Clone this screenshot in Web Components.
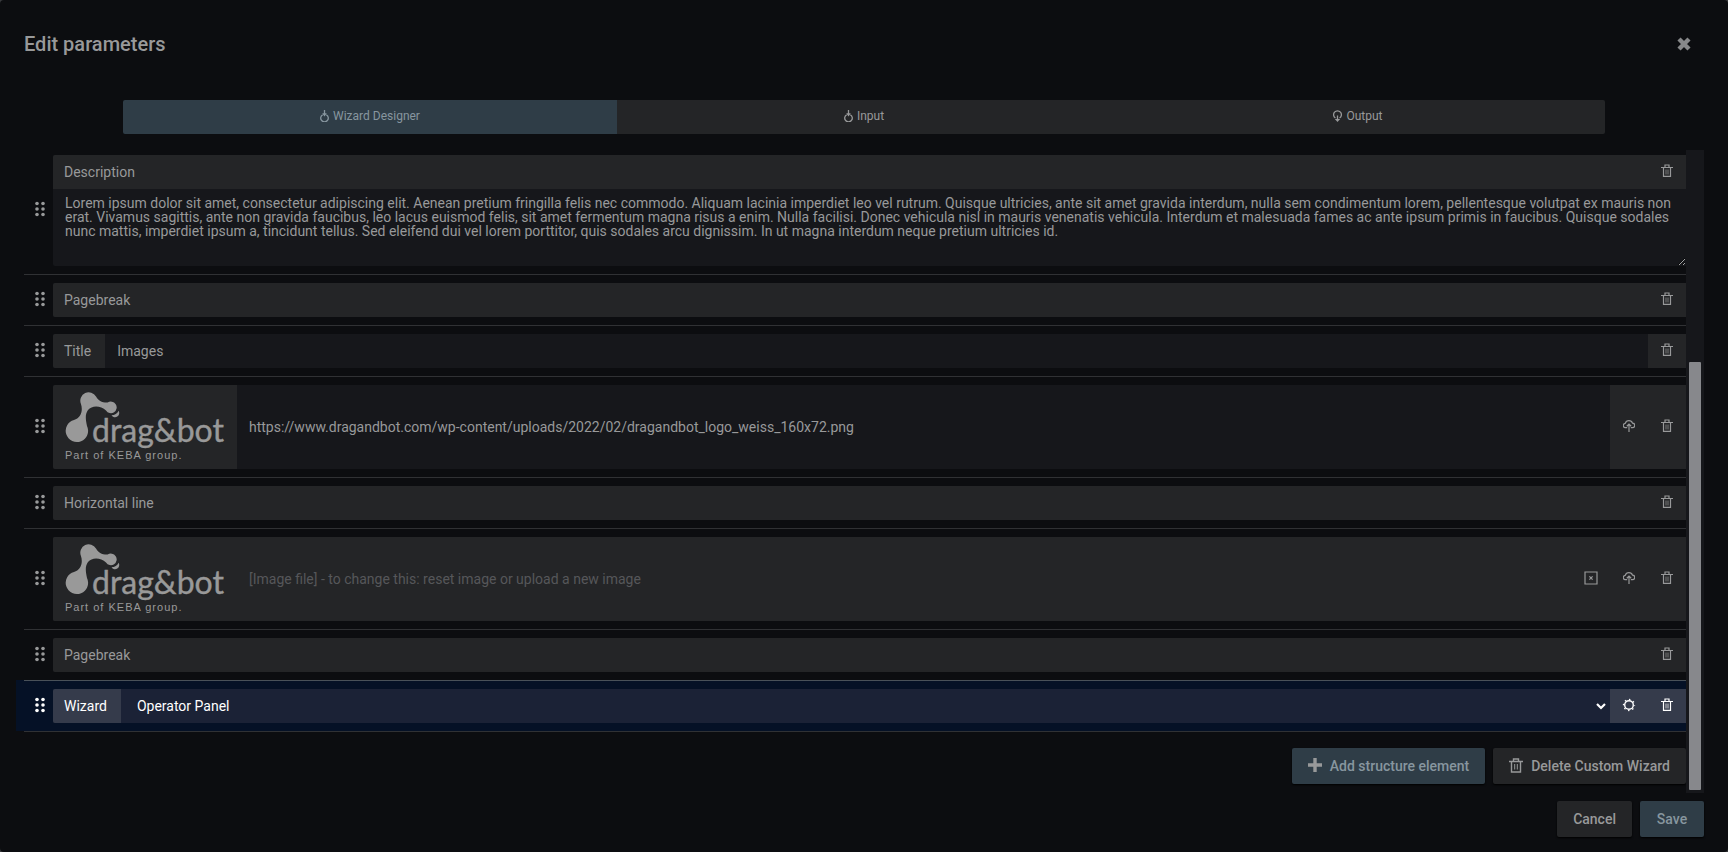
<!DOCTYPE html>
<html lang="en">
<head>
<meta charset="utf-8">
<title>Edit parameters</title>
<style>
  body {
    margin: 0;
    background: #3a3b3e;
    font-family: Roboto, "Liberation Sans", sans-serif;
    font-size: 14px;
    color: #98999a;
    --dialog: #0c0d10;
    --block: #242527;
    --field: #16171b;
    --line: #303134;
    --primary: #2f3d47;
    --primary-text: #87969f;
  }
</style>
</head>
<body>
<edit-dialog heading="Edit parameters">
  <tab-bar slot="tabs"></tab-bar>

  <structure-row type="text" label="Description" value="Lorem ipsum dolor sit amet, consectetur adipiscing elit. Aenean pretium fringilla felis nec commodo. Aliquam lacinia imperdiet leo vel rutrum. Quisque ultricies, ante sit amet gravida interdum, nulla sem condimentum lorem, pellentesque volutpat ex mauris non erat. Vivamus sagittis, ante non gravida faucibus, leo lacus euismod felis, sit amet fermentum magna risus a enim. Nulla facilisi. Donec vehicula nisl in mauris venenatis vehicula. Interdum et malesuada fames ac ante ipsum primis in faucibus. Quisque sodales nunc mattis, imperdiet ipsum a, tincidunt tellus. Sed eleifend dui vel lorem porttitor, quis sodales arcu dignissim. In ut magna interdum neque pretium ultricies id."></structure-row>
  <structure-row type="plain" label="Pagebreak"></structure-row>
  <structure-row type="title" label="Title" value="Images"></structure-row>
  <structure-row type="image" label="Image URL" value="https://www.dragandbot.com/wp-content/uploads/2022/02/dragandbot_logo_weiss_160x72.png"></structure-row>
  <structure-row type="plain" label="Horizontal line"></structure-row>
  <structure-row type="file" label="Image file" value="[Image file] - to change this: reset image or upload a new image"></structure-row>
  <structure-row type="plain" label="Pagebreak"></structure-row>
  <structure-row type="wizard" label="Wizard" value="Operator Panel" active></structure-row>

  <text-button slot="actions" kind="primary" icon="plus">Add structure element</text-button>
  <text-button slot="actions" icon="trash-large">Delete Custom Wizard</text-button>

  <text-button slot="footer">Cancel</text-button>
  <text-button slot="footer" kind="primary">Save</text-button>
</edit-dialog>

<script>
const ICONS = {
  trash: [12, 13, '<path d="M0 3.500h12M4 3V1h4v2M2.500 3.500v8.800h7V3.500" stroke-width="1.200"/><path d="M5 5.500v5M7 5.500v5" opacity=".75"/>'],
  'trash-large': [14, 15, '<path d="M0 3.500h14M4.500 3V1h5v2M2.500 3.500v10.500h9V3.500" stroke-width="1.400"/><path d="M5.700 6v5.500M8.300 6v5.500"/>'],
  upload: [12, 13, '<path d="M4.200 8.700H2.700A2.200 2.200 0 0 1 2.300 4.300 3.800 3.800 0 0 1 9.500 4.100 2.300 2.300 0 0 1 9.300 8.700H7.800M6 13V5.300M3.800 7.300l2.200-2.100 2.200 2.100" stroke-width="1.200"/>'],
  reset: [14, 14, '<path d="M1 1h12v12H1z" stroke-width="1.200"/><path d="M5.400 5.400l3.200 3.200M8.600 5.400L5.400 8.600" stroke-width="1.200"/>'],
  gear: [14, 14, '<circle cx="7" cy="7" r="4.300" stroke-width="1.400"/><circle cx="7" cy="7" r="5.500" stroke-width="1.300" stroke-dasharray="1.500 2.820" stroke-dashoffset=".75"/>'],
  input: [9, 12, '<path d="M2.700 4.700a3.800 3.800 0 1 0 3.600 0M4.500 0v5" stroke-width="1.300"/><path d="M2.200 3.300h4.600L4.500 6.400z" fill="currentColor" stroke="none"/>'],
  output: [9, 12, '<path d="M2.400 8A3.900 3.900 0 1 1 6.600 8M4.500 5.500v4" stroke-width="1.300"/><path d="M1.800 9h5.400L4.500 12z" fill="currentColor" stroke="none"/>'],
  plus: [14, 14, '<path d="M7 0v14M0 7h14" stroke-width="3.400"/>'],
  close: [16, 16, '<path d="M3 3l10 10M13 3L3 13" stroke-width="4.400"/>'],
  chevron: [10, 8, '<path d="M1 2l4 4 4-4" stroke-width="2.200"/>'],
  handle: [10, 16, [2, 8].map(x => [2.5, 8, 13.5].map(y =>
    `<circle cx="${x}" cy="${y}" r="1.8" fill="currentColor" stroke="none"/>`).join('')).join('')]
};

class AppIcon extends HTMLElement {
  constructor() {
    super();
    this.attachShadow({ mode: 'open' });
  }

  connectedCallback() {
    const [w, h, shape] = ICONS[this.getAttribute('name')];
    this.shadowRoot.innerHTML = `
      <style>
        :host { display: inline-flex; flex: none; }
        svg { display: block; fill: none; stroke: currentColor; }
      </style>
      <svg width="${w}" height="${h}" viewBox="0 0 ${w} ${h}" aria-hidden="true">${shape}</svg>
    `;
  }
}
customElements.define('app-icon', AppIcon);

class BrandLogo extends HTMLElement {
  constructor() {
    super();
    this.attachShadow({ mode: 'open' }).innerHTML = `
      <style>
        :host { display: block; }
        svg { display: block; fill: #999; }
        .name { font: 32px Lato, sans-serif; stroke: #999; stroke-width: .4; }
        .claim { font: 11px "Liberation Sans", sans-serif; letter-spacing: 1px; }
      </style>
      <svg width="160" height="72" viewBox="0 0 160 72">
        <path d="M15.800 12.500A8.400 8.400 0 0 1 31 5.500C33 9.500 37 11.800 42.600 11.600A5.800 5.800 0 1 1 41 19.500C36 14.500 27 13.800 23 19C20 23 20.500 28 22 35A11.200 11.200 0 1 1 9 29C15.500 27 18.500 20 15.800 12.500z"/>
        <path d="M46.500 24.300A8 8 0 0 0 53.600 19.800A4.200 4.200 0 0 1 46.500 24.300z"/>
        <text class="name" x="27" y="51">drag&amp;bot</text>
        <text class="claim" x="0" y="68">Part of KEBA group.</text>
      </svg>
    `;
  }
}
customElements.define('brand-logo', BrandLogo);

class TextButton extends HTMLElement {
  constructor() {
    super();
    this.attachShadow({ mode: 'open' });
  }

  connectedCallback() {
    const icon = this.getAttribute('icon');
    this.shadowRoot.innerHTML = `
      <style>
        :host { display: block; }
        button {
          display: flex;
          align-items: center;
          justify-content: center;
          gap: 8px;
          min-width: 64px;
          height: 36px;
          padding: 0 16px;
          border: 0;
          border-radius: 2px;
          background: var(--block);
          color: inherit;
          font: inherit;
          font-weight: 500;
          box-shadow: 0 1px 2px #000;
        }
        :host([kind="primary"]) button {
          background: var(--primary);
          color: var(--primary-text);
        }
        app-icon {
          padding-bottom: 2px;
          color: #98999a;
        }
      </style>
      <button type="button">${icon ? `<app-icon name="${icon}"></app-icon>` : ''}<slot></slot></button>
    `;
  }
}
customElements.define('text-button', TextButton);

class TabBar extends HTMLElement {
  constructor() {
    super();
    this.attachShadow({ mode: 'open' }).innerHTML = `
      <style>
        :host { display: block; }
        div {
          display: grid;
          grid-template-columns: repeat(3, 1fr);
          border-radius: 2px;
          overflow: hidden;
        }
        button {
          display: flex;
          align-items: center;
          justify-content: center;
          gap: 4px;
          height: 34px;
          padding: 0 0 2px;
          border: 0;
          background: var(--block);
          color: inherit;
          font: inherit;
          font-size: 12px;
        }
        [aria-selected="true"] {
          background: var(--primary);
          color: var(--primary-text);
        }
      </style>
      <div role="tablist">
        <button type="button" role="tab" aria-selected="true"><app-icon name="input"></app-icon>Wizard Designer</button>
        <button type="button" role="tab" aria-selected="false"><app-icon name="input"></app-icon>Input</button>
        <button type="button" role="tab" aria-selected="false"><app-icon name="output"></app-icon>Output</button>
      </div>
    `;
  }
}
customElements.define('tab-bar', TabBar);

const rowTemplate = document.createElement('template');
rowTemplate.innerHTML = `
  <style>
    :host {
      display: block;
      margin-left: -8px;
      padding-left: 8px;
    }
    .row {
      display: flex;
      align-items: center;
      padding: 8px 0;
      border-top: 1px solid var(--line);
    }
    :host([type="text"]) .row {
      padding-top: 5px;
      border-top: 0;
    }
    .handle {
      display: flex;
      box-sizing: border-box;
      width: 29px;
      padding: 0 0 3px 11px;
    }
    .block {
      display: flex;
      flex: 1;
      min-width: 0;
      min-height: 34px;
      border-radius: 2px 0 0 2px;
      background: var(--field);
      overflow: hidden;
    }
    .label {
      display: flex;
      align-items: center;
      min-height: 34px;
      padding: 0 14px 0 11px;
      background: var(--block);
    }
    .wide { flex: 1; }
    .head { display: flex; }
    input, textarea, select {
      box-sizing: border-box;
      flex: 1;
      width: 100%;
      min-width: 0;
      margin: 0;
      padding: 0 12px;
      border: 0;
      border-radius: 0;
      outline: 0;
      background: transparent;
      color: inherit;
      font: inherit;
    }
    textarea {
      display: block;
      flex: none;
      height: 77px;
      padding: 7px 12px;
      line-height: 14px;
      resize: vertical;
    }
    select {
      grid-area: 1 / 1;
      padding: 0 16px;
      appearance: none;
    }
    .select {
      display: grid;
      flex: 1;
      align-items: stretch;
    }
    .select app-icon {
      grid-area: 1 / 1;
      place-self: center end;
      padding-right: 4px;
      pointer-events: none;
    }
    .logo {
      padding: 6px 12px;
      background: var(--block);
    }
    .tools {
      display: flex;
      background: var(--block);
    }
    .tools button {
      display: flex;
      align-items: center;
      justify-content: center;
      width: 38px;
      padding: 0 0 3px;
      border: 0;
      background: transparent;
      color: inherit;
    }
    :host([type="text"]) .block { flex-direction: column; }
    :host([type="file"]) .block { background: var(--block); }
    input:disabled { color: #56575a; }
    :host([active]) {
      margin-right: -2px;
      padding-right: 2px;
      background: #051126;
      color: #fff;
      --block: #353b4b;
      --field: #1b2236;
      --line: #495159;
    }
  </style>
  <div class="row">
    <span class="handle"><app-icon name="handle"></app-icon></span>
    <div class="block"></div>
  </div>
`;

class StructureRow extends HTMLElement {
  constructor() {
    super();
    this.attachShadow({ mode: 'open' });
    this.shadowRoot.appendChild(rowTemplate.content.cloneNode(true));
    this.$block = this.shadowRoot.querySelector('.block');
  }

  connectedCallback() { this._render(); }

  _tools(...names) {
    const titles = { trash: 'Delete', upload: 'Upload image', reset: 'Reset image', gear: 'Settings' };
    return `<div class="tools">${names.map(name =>
      `<button type="button" aria-label="${titles[name]}"><app-icon name="${name}"></app-icon></button>`).join('')}</div>`;
  }

  _render() {
    const label = this.getAttribute('label');
    const value = this.getAttribute('value');
    const views = {
      plain: () => `<span class="label wide">${label}</span>${this._tools('trash')}`,
      text: () => `
        <div class="head"><label class="label wide" for="field">${label}</label>${this._tools('trash')}</div>
        <textarea id="field" spellcheck="false">${value}</textarea>`,
      title: () => `
        <label class="label" for="field">${label}</label>
        <input id="field" type="text" value="${value}">${this._tools('trash')}`,
      image: () => `
        <div class="logo"><brand-logo></brand-logo></div>
        <input type="text" aria-label="${label}" value="${value}">${this._tools('upload', 'trash')}`,
      file: () => `
        <div class="logo"><brand-logo></brand-logo></div>
        <input type="text" aria-label="${label}" value="${value}" disabled>${this._tools('reset', 'upload', 'trash')}`,
      wizard: () => `
        <label class="label" for="field">${label}</label>
        <div class="select">
          <select id="field"><option>${value}</option></select>
          <app-icon name="chevron"></app-icon>
        </div>${this._tools('gear', 'trash')}`
    };
    this.$block.innerHTML = views[this.getAttribute('type')]();
  }
}
customElements.define('structure-row', StructureRow);

class EditDialog extends HTMLElement {
  constructor() {
    super();
    this.attachShadow({ mode: 'open' }).innerHTML = `
      <style>
        :host {
          box-sizing: border-box;
          display: flex;
          flex-direction: column;
          min-height: 100vh;
          padding: 0 24px 15px;
          border-radius: 4px;
          background: var(--dialog);
        }
        header {
          display: flex;
          align-items: center;
          justify-content: space-between;
          height: 88px;
          padding-right: 12px;
        }
        h1 {
          margin: 0;
          font-size: 20px;
          font-weight: 500;
        }
        .close {
          display: flex;
          padding: 0;
          border: 0;
          background: transparent;
          color: #87888a;
        }
        .tabs { padding: 12px 99px 16px; }
        .scroll {
          display: flex;
          flex: 1;
        }
        .list {
          flex: 1;
          min-width: 0;
        }
        .actions {
          display: flex;
          justify-content: flex-end;
          gap: 8px;
          padding: 16px 0 9px;
          border-top: 1px solid var(--line);
        }
        .track {
          display: grid;
          grid-template-rows: 209fr 428fr;
          box-sizing: border-box;
          width: 18px;
          padding: 3px;
          background: var(--field);
        }
        .thumb {
          grid-row: 2;
          border-radius: 1px;
          background: #87888c;
        }
        footer {
          display: flex;
          justify-content: flex-end;
          gap: 8px;
          padding-top: 8px;
        }
      </style>
      <header>
        <h1></h1>
        <button class="close" type="button" aria-label="Close"><app-icon name="close"></app-icon></button>
      </header>
      <div class="tabs"><slot name="tabs"></slot></div>
      <div class="scroll">
        <div class="list">
          <slot></slot>
          <div class="actions"><slot name="actions"></slot></div>
        </div>
        <div class="track"><div class="thumb"></div></div>
      </div>
      <footer><slot name="footer"></slot></footer>
    `;
  }

  connectedCallback() {
    this.shadowRoot.querySelector('h1').textContent = this.getAttribute('heading');
  }
}
customElements.define('edit-dialog', EditDialog);
</script>
</body>
</html>
